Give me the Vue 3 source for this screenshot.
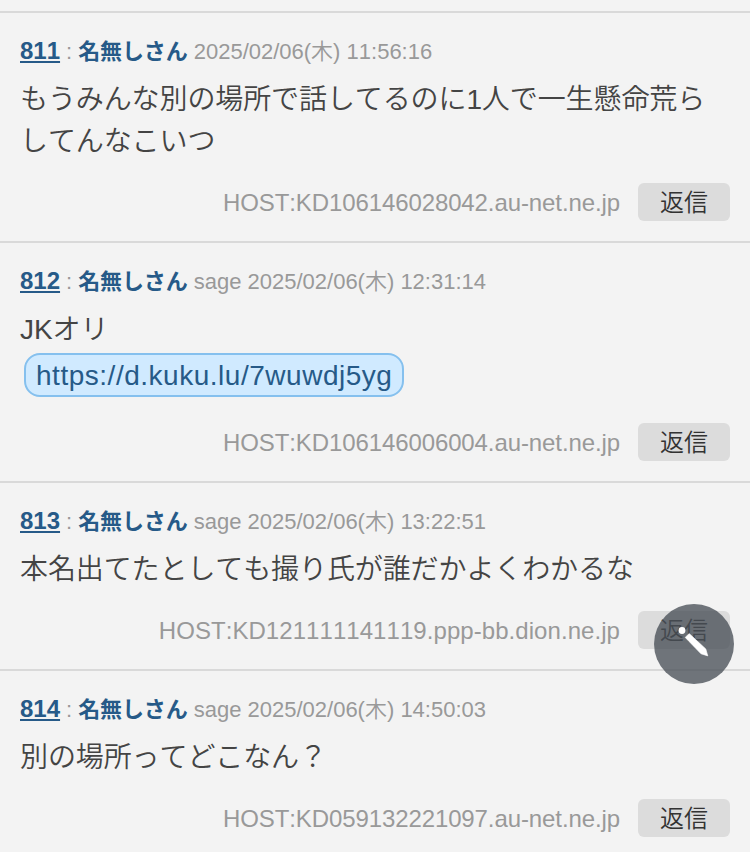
<template>
  <div class="thread">
    <article v-for="post in posts" :key="post.no" class="post">
      <header class="post-header">
        <a class="post-no" href="#">{{ post.no }}</a>
        <span class="colon">:</span>
        <span class="post-name">名無しさん</span>
        <span class="post-meta">{{ post.mail ? post.mail + ' ' : '' }}{{ post.date }}</span>
      </header>
      <div class="post-body">
        <p v-for="line in post.lines" :key="line">{{ line }}</p>
        <a v-if="post.link" class="post-link" href="#">{{ post.link }}</a>
      </div>
      <footer class="post-footer">
        <span class="host" :class="{ 'host-wide': post.host.includes('dion') }">HOST:{{ post.host }}</span>
        <button class="reply" type="button">返信</button>
      </footer>
    </article>
    <button class="write" type="button" aria-label="書き込み">
      <svg viewBox="0 0 80 80" xmlns="http://www.w3.org/2000/svg">
        <circle cx="28" cy="26.5" r="3.4" fill="#fff" />
        <path d="M35.2 29.6L51.8 45L53.8 51.9L47 49.8L31.2 33.4Z" fill="#fff" stroke="#fff" stroke-width="0.6" stroke-linejoin="round" />
      </svg>
    </button>
  </div>
</template>

<script setup>
const posts = [
  {
    no: 811,
    mail: '',
    date: '2025/02/06(木) 11:56:16',
    lines: ['もうみんな別の場所で話してるのに1人で一生懸命荒ら', 'してんなこいつ'],
    host: 'KD106146028042.au-net.ne.jp'
  },
  {
    no: 812,
    mail: 'sage',
    date: '2025/02/06(木) 12:31:14',
    lines: ['JKオリ'],
    link: 'https://d.kuku.lu/7wuwdj5yg',
    host: 'KD106146006004.au-net.ne.jp'
  },
  {
    no: 813,
    mail: 'sage',
    date: '2025/02/06(木) 13:22:51',
    lines: ['本名出てたとしても撮り氏が誰だかよくわかるな'],
    host: 'KD121111141119.ppp-bb.dion.ne.jp'
  },
  {
    no: 814,
    mail: 'sage',
    date: '2025/02/06(木) 14:50:03',
    lines: ['別の場所ってどこなん？'],
    host: 'KD059132221097.au-net.ne.jp'
  }
]
</script>

<style>
body {
  margin: 0;
  background: #f3f3f3;
}
</style>

<style scoped>
.thread {
  height: 852px;
  padding-top: 11px;
  box-sizing: border-box;
  overflow: hidden;
  background: #f3f3f3;
  color: #444;
  font-family: "Liberation Sans", "Noto Sans CJK JP", sans-serif;
  font-weight: 350;
  font-kerning: none;
}

.post {
  padding: 20px;
  border-top: 2px solid #d9d9d9;
}

.post-header {
  display: flex;
  align-items: baseline;
  height: 35px;
  margin-bottom: 10px;
  line-height: 35px;
  font-size: 22px;
  color: #999;
  white-space: nowrap;
}

.post-no {
  font-size: 24px;
  font-weight: bold;
  color: #265a88;
  text-decoration: underline;
  text-decoration-thickness: 2px;
  text-underline-offset: 2px;
}

.colon {
  margin: 0 6px;
}

.post-name {
  margin-right: 6px;
  font-weight: bold;
  letter-spacing: -0.1px;
  color: #265a88;
}

.post-body {
  display: flow-root;
  font-size: 28px;
  letter-spacing: -0.1px;
  line-height: 43px;
}

.post-body p {
  height: 42px;
  margin: 0;
  white-space: nowrap;
}

.post-link {
  display: block;
  box-sizing: border-box;
  width: fit-content;
  height: 44px;
  margin: 3px 4px 5px;
  padding: 0 10px;
  border: 2px solid #85c0ee;
  border-radius: 16px;
  background: #d0eaff;
  color: #265a88;
  letter-spacing: 0.52px;
  line-height: 41px;
  text-decoration: none;
}

.post-footer {
  display: flex;
  justify-content: flex-end;
  align-items: center;
  gap: 18px;
  height: 38px;
  margin-top: 21px;
}

.host {
  font-size: 24px;
  line-height: 38px;
  padding-top: 2px;
  letter-spacing: -0.1px;
  color: #999;
}

.host-wide {
  letter-spacing: 0.06px;
}

.reply {
  width: 92px;
  height: 38px;
  padding: 2px 0 0;
  border: 0;
  border-radius: 6px;
  background: #dcdcdc;
  color: #333;
  font-family: inherit;
  font-size: 24px;
  font-weight: 350;
  line-height: 36px;
}

.write {
  position: fixed;
  top: 604px;
  left: 654px;
  width: 80px;
  height: 80px;
  padding: 0;
  border: 0;
  border-radius: 50%;
  background: rgba(73, 80, 87, 0.78);
}

.write svg {
  display: block;
  width: 80px;
  height: 80px;
}
</style>
